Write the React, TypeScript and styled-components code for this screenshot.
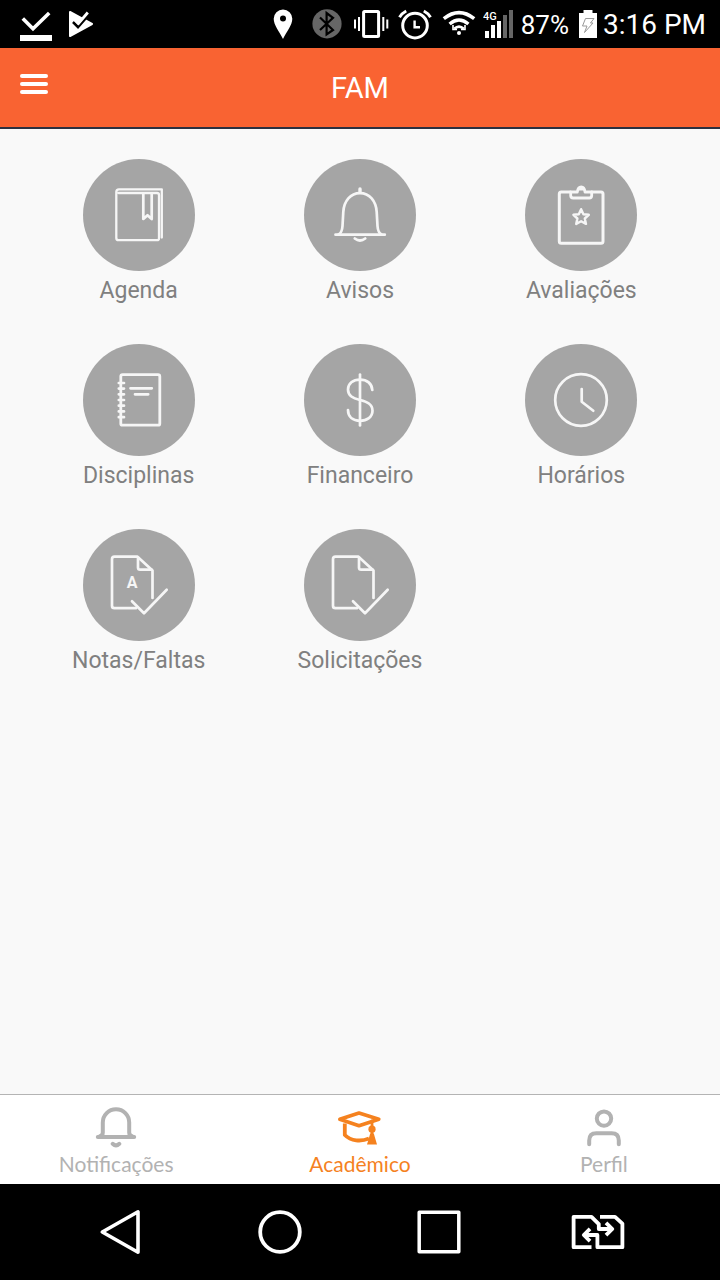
import React from 'react';
import styled, { createGlobalStyle } from 'styled-components';

const GlobalStyle = createGlobalStyle`
  *, *::before, *::after { box-sizing: border-box; }
  body { margin: 0; background: #f9f9f9; font-family: Roboto, "Liberation Sans", sans-serif; }
  button { margin: 0; padding: 0; border: 0; background: none; font: inherit; color: inherit; cursor: pointer; }
  svg { display: block; }
`;

const Screen = styled.div`
  display: flex;
  flex-direction: column;
  min-height: 100vh;
`;

const StatusBar = styled.div`
  display: flex;
  align-items: center;
  justify-content: space-between;
  height: 48px;
  padding: 0 14px 0 20px;
  background: #000;
  color: #fff;
`;

const StatusGroup = styled.div<{ $gap: number }>`
  display: flex;
  align-items: center;
  gap: ${(p) => p.$gap}px;
`;

const StatusIcons = styled.div`
  display: flex;
`;

const StatusText = styled.span<{ $size: number }>`
  font-size: ${(p) => p.$size}px;
  line-height: 32px;
  padding-top: 2px;
  white-space: nowrap;
`;

const Header = styled.header`
  display: grid;
  grid-template-columns: 28px 1fr 28px;
  align-items: center;
  height: 81px;
  padding: 0 20px;
  background: #f96332;
  border-bottom: 2px solid #2c3040;
  color: #fff;
`;

const MenuButton = styled.button`
  display: flex;
  flex-direction: column;
  gap: 4px;
  margin-bottom: 8px;
`;

const MenuLine = styled.span`
  width: 28px;
  height: 4px;
  border-radius: 2px;
  background: #fff;
`;

const Title = styled.h1`
  margin: 0;
  font-size: 29px;
  line-height: 32px;
  font-weight: 400;
  text-align: center;
`;

const Main = styled.main`
  flex: 1;
  padding: 30px 28px;
`;

const TileGrid = styled.div`
  display: grid;
  grid-template-columns: repeat(3, 1fr);
  row-gap: 33px;
`;

const Tile = styled.button`
  display: flex;
  flex-direction: column;
  align-items: center;
  color: #808080;
`;

const TileCircle = styled.span`
  width: 112px;
  height: 112px;
  border-radius: 50%;
  background: #a5a5a5;
  color: #f6f6f6;
`;

const TileLabel = styled.span`
  font-size: 23px;
  line-height: 40px;
  white-space: nowrap;
`;

const TabBar = styled.nav`
  display: grid;
  grid-template-columns: 1fr 1.1fr 1fr;
  height: 90px;
  padding-top: 9px;
  border-top: 1px solid #b4b4b4;
  background: #fff;
`;

const Tab = styled.button<{ $active?: boolean }>`
  display: flex;
  flex-direction: column;
  align-items: center;
  gap: 4px;
  color: ${(p) => (p.$active ? '#f5821f' : '#b2b2b2')};
`;

const TabLabel = styled.span`
  font-family: Lato, "Open Sans", sans-serif;
  font-size: 21px;
  line-height: 24px;
`;

const SystemNav = styled.nav`
  display: grid;
  grid-template-columns: repeat(4, 1fr);
  height: 96px;
  padding: 0 43px 0 41px;
  background: #000;
  color: #fff;
`;

const SystemButton = styled.button`
  display: flex;
  align-items: center;
  justify-content: center;
`;

type Drawing = { children: React.ReactNode };

const StatusIcon = ({ width = 44, children }: Drawing & { width?: number }) => (
  <svg width={width} height="48" viewBox={`0 0 ${width} 48`} fill="none" stroke="#fff" aria-hidden="true">
    {children}
  </svg>
);

const TileIcon = ({ children }: Drawing) => (
  <svg width="112" height="112" viewBox="0 0 112 112" fill="none" stroke="currentColor" strokeWidth="2.7"
    strokeLinecap="round" strokeLinejoin="round" aria-hidden="true">
    {children}
  </svg>
);

const TabIcon = ({ children }: Drawing) => (
  <svg width="48" height="44" viewBox="0 0 48 44" fill="none" stroke="currentColor" strokeWidth="4"
    strokeLinecap="round" strokeLinejoin="round" aria-hidden="true">
    {children}
  </svg>
);

const SystemIcon = ({ children }: Drawing) => (
  <svg width="56" height="48" viewBox="0 0 56 48" fill="none" stroke="currentColor" strokeWidth="3.8"
    strokeLinejoin="round" aria-hidden="true">
    {children}
  </svg>
);

const DocumentCheck = () => (
  <>
    <path d="M53 79.2H31.5Q29 79.2 29 76.7V30.2Q29 27.7 31.5 27.7H54.5L69.5 41.5V69" />
    <path d="M55 28.5V38.5Q55 40.7 57.2 40.7H68.5" />
    <path d="M49 72.3L61 84.3L83.7 60.7" />
  </>
);

const tiles = [
  {
    label: 'Agenda',
    icon: (
      <>
        <path d="M35.5 34H74Q76 34 76 36V79.2Q76 81.2 74 81.2H35.5Q33.3 81.2 33.3 79V33Q33.3 30.3 36 30.3H78.8V78.5" strokeWidth="2.3" />
        <path d="M60.3 34.5V60L64.5 56.2L68.7 60V34.5" />
      </>
    ),
  },
  {
    label: 'Avisos',
    icon: (
      <>
        <path d="M31.5 75.7H80.8" />
        <path d="M34.5 75.5C37.5 74 38.2 71.5 38.5 67L39.3 53C40 42 46.5 34.2 56 34.2S72 42 72.7 53L73.5 67C73.8 71.5 74.5 74 77.5 75.5" />
        <path d="M56 30V33" strokeWidth="3.4" />
        <path d="M50.8 79.5Q56 83.5 61.2 79.5" strokeWidth="2.8" />
      </>
    ),
  },
  {
    label: 'Avaliações',
    icon: (
      <>
        <path d="M45.5 33H36.3Q34.3 33 34.3 35V82.3Q34.3 84.3 36.3 84.3H76Q78 84.3 78 82.3V35Q78 33 76 33H66.7" strokeWidth="3" />
        <path d="M45.7 33H52.3Q53 28 56.2 28T60 33H66.7V36.5Q66.7 39 64.2 39H48.2Q45.7 39 45.7 36.5Z" strokeWidth="2.8" />
        <path d="M53 31.5Q53.5 28 56.2 28T59.4 31.5Z" fill="currentColor" stroke="none" />
        <path d="M56.1 50.2L58.4 55.2L63.8 55.8L59.8 59.5L61 64.9L56.1 62.2L51.2 64.9L52.4 59.5L48.4 55.8L53.8 55.2Z" strokeWidth="2.4" />
      </>
    ),
  },
  {
    label: 'Disciplinas',
    icon: (
      <>
        <rect x="37.8" y="30.7" width="39" height="50.5" rx="1.8" strokeWidth="2.8" />
        <path d="M35.8 39H41M35.8 44.6H41M35.8 50.3H41M35.8 56H41M35.8 61.7H41M35.8 67.4H41M35.8 73.2H41" />
        <path d="M47.5 44.3H68.8M52 50.3H65.2" />
      </>
    ),
  },
  {
    label: 'Financeiro',
    icon: (
      <>
        <path d="M56 30.5V81.5" />
        <path d="M68.3 46C68 39.5 63 35.6 56 35.6S44 39.5 44 45.6C44 52 49 54.2 56 56S68.5 60 68.5 66.8C68.5 73 63 76.8 56 76.8S44 73 44 66" />
      </>
    ),
  },
  {
    label: 'Horários',
    icon: (
      <>
        <circle cx="56" cy="56" r="25.8" />
        <path d="M56.7 45V57.7L68.3 66.7" />
      </>
    ),
  },
  {
    label: 'Notas/Faltas',
    icon: (
      <>
        <DocumentCheck />
        <text x="49" y="59" textAnchor="middle" fontSize="16" fontWeight="700" fill="currentColor" stroke="none">A</text>
      </>
    ),
  },
  { label: 'Solicitações', icon: <DocumentCheck /> },
];

const tabs = [
  {
    label: 'Notificações',
    icon: (
      <>
        <path d="M5.8 33H42.2" />
        <path d="M7.5 32.5Q10.8 31.5 10.8 28.5V18.5A13.2 13.2 0 0 1 37.2 18.5V28.5Q37.2 31.5 40.5 32.5" />
        <path d="M20.7 39.8Q24 43 27.3 39.8" />
      </>
    ),
  },
  {
    label: 'Acadêmico',
    active: true,
    icon: (
      <>
        <path d="M3.8 15.3L23 9L42.8 15.3L23 21.8Z" strokeWidth="3.6" />
        <path d="M8.8 19.5V31C15 37.2 25 37.8 33 34.5" strokeLinecap="butt" strokeWidth="3.8" />
        <path d="M36 17V33" strokeWidth="2.8" />
        <circle cx="36" cy="25.2" r="3.6" fill="currentColor" stroke="none" />
        <path d="M34.2 29.5H37.8L41 40.5H31Z" fill="currentColor" stroke="none" />
      </>
    ),
  },
  {
    label: 'Perfil',
    icon: (
      <>
        <circle cx="24" cy="14.6" r="7.2" />
        <path d="M9.2 40.2V36.5Q9.2 29.3 16.4 29.3H31.6Q38.8 29.3 38.8 36.5V40.2" />
      </>
    ),
  },
];

const systemButtons = [
  { label: 'Voltar', icon: <path d="M9.3 24L45 3.8V44.2Z" strokeWidth="3.6" /> },
  { label: 'Início', icon: <circle cx="28" cy="24" r="19.8" /> },
  { label: 'Recentes', icon: <rect x="8.2" y="4.2" width="39.6" height="39.6" strokeWidth="3.5" /> },
  {
    label: 'Trocar SIM',
    icon: (
      <>
        <path d="M21.5 39.2H3.6V8.8H21.5L28.8 16.2V21H41.5" />
        <path d="M36 14.8L42.3 21L36 27.2" />
        <path d="M30 8.8H45L52.4 15.6V39.2H27.4V27H15" />
        <path d="M20 20.8L13.8 27L20 33.2" />
      </>
    ),
  },
];

export default function App() {
  return (
    <Screen>
      <GlobalStyle />
      <StatusBar>
        <StatusGroup $gap={16}>
          <StatusIcon width={32}>
            <path d="M2.8 18.5L13 28.8L29.2 13" strokeWidth="3.6" />
            <path d="M0 38H32" strokeWidth="6" />
          </StatusIcon>
          <StatusIcon width={26}>
            <path d="M2 12L24 24L2 36Z" fill="#fff" strokeWidth="2" strokeLinejoin="round" />
            <path d="M5 22L10 27L22 13.5" stroke="#000" strokeWidth="2.6" />
            <path d="M18 12.5L26 8V19L21 18Z" fill="#000" stroke="none" />
            <path d="M6.5 19.5L10.5 23.5L19.8 12.5" strokeWidth="2.8" />
          </StatusIcon>
        </StatusGroup>
        <StatusGroup $gap={8}>
          <StatusGroup $gap={2}>
            <StatusIcons>
              <StatusIcon>
                <path d="M22 39C18 31 12.7 25 12.7 18.8A9.3 9.3 0 0 1 31.3 18.8C31.3 25 26 31 22 39Z" fill="#fff" stroke="none" />
                <circle cx="22" cy="18.6" r="3" fill="#000" stroke="none" />
              </StatusIcon>
              <StatusIcon>
                <circle cx="22" cy="23.8" r="14.6" fill="#666" stroke="none" />
                <path d="M15 17.5L28 30L21.6 34.5V13L28 17.8L15 30" stroke="#000" strokeWidth="2.2" />
              </StatusIcon>
              <StatusIcon>
                <rect x="14.6" y="11.4" width="15" height="25.2" rx="1" strokeWidth="3" />
                <path d="M10 17V31M34.3 17V31M6 19.5V28.5M38.3 19.5V28.5" strokeWidth="2" />
              </StatusIcon>
              <StatusIcon>
                <circle cx="22" cy="25.6" r="12.3" strokeWidth="3" />
                <path d="M6.5 17.2Q9 13.2 13.2 11M37.5 17.2Q35 13.2 30.8 11" strokeWidth="3" />
                <path d="M21.6 20.5V27.2H27" strokeWidth="2.4" />
              </StatusIcon>
              <StatusIcon>
                <path d="M6.8 18.6Q22 6.6 37.2 18.6" strokeWidth="3.6" />
                <path d="M12.6 24Q22 16 31.4 24" strokeWidth="3.4" />
                <path d="M17.2 28.8Q22 24.4 26.8 28.8" strokeWidth="2.6" />
                <path d="M16 25V29.5H20M28 25V29.5H24" strokeWidth="1.6" />
                <circle cx="22" cy="33" r="2" fill="#fff" stroke="none" />
              </StatusIcon>
            </StatusIcons>
            <StatusIcon width={30}>
              <text x="0" y="20" fontSize="11" fontWeight="500" fill="#fff" stroke="none">4G</text>
              <path d="M4 38V31M10 38V25M16 38V21" strokeWidth="4" />
              <path d="M22 38V15M28 38V10" stroke="#666" strokeWidth="4" />
            </StatusIcon>
          </StatusGroup>
          <StatusGroup $gap={10}>
            <StatusText $size={26}>87%</StatusText>
            <StatusGroup $gap={6}>
              <StatusIcon width={18}>
                <path d="M0 13H4.5V10H13.5V13H18V38H0Z" fill="#fff" stroke="none" />
                <path d="M6.5 18.5H15L11.5 23H14L5.5 32.5L8 26H3.5Z" stroke="#999" strokeWidth="1" />
              </StatusIcon>
              <StatusText $size={28}>3:16 PM</StatusText>
            </StatusGroup>
          </StatusGroup>
        </StatusGroup>
      </StatusBar>

      <Header>
        <MenuButton type="button" aria-label="Menu">
          <MenuLine />
          <MenuLine />
          <MenuLine />
        </MenuButton>
        <Title>FAM</Title>
      </Header>

      <Main>
        <TileGrid>
          {tiles.map((tile) => (
            <Tile type="button" key={tile.label}>
              <TileCircle>
                <TileIcon>{tile.icon}</TileIcon>
              </TileCircle>
              <TileLabel>{tile.label}</TileLabel>
            </Tile>
          ))}
        </TileGrid>
      </Main>

      <TabBar>
        {tabs.map((tab) => (
          <Tab type="button" key={tab.label} $active={tab.active}>
            <TabIcon>{tab.icon}</TabIcon>
            <TabLabel>{tab.label}</TabLabel>
          </Tab>
        ))}
      </TabBar>

      <SystemNav>
        {systemButtons.map((button) => (
          <SystemButton type="button" key={button.label} aria-label={button.label}>
            <SystemIcon>{button.icon}</SystemIcon>
          </SystemButton>
        ))}
      </SystemNav>
    </Screen>
  );
}
